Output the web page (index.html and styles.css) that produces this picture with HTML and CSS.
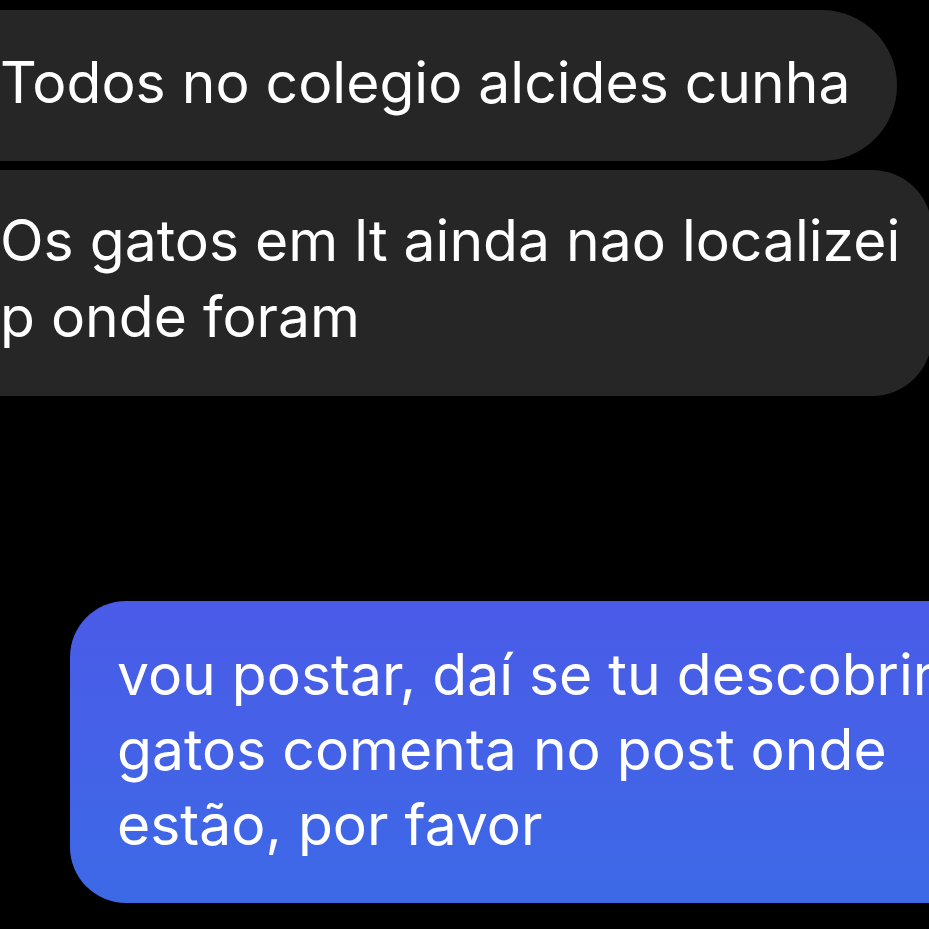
FILE: index.html
```html
<!DOCTYPE html>
<html lang="pt">
<head>
<meta charset="utf-8">
<title>Mensagens</title>
<link rel="stylesheet" href="styles.css">
</head>
<body>
<div class="chat">
  <div class="bubble incoming first">Todos no colegio alcides cunha</div>
  <div class="bubble incoming second">Os gatos em lt ainda nao localizei<br>p onde foram</div>
  <div class="bubble outgoing">vou postar, daí se tu descobrir<br>gatos comenta no post onde<br>estão, por favor</div>
</div>
</body>
</html>
```
FILE: styles.css
```css
html, body {
  margin: 0;
  padding: 0;
  background: #000;
}
body {
  width: 929px;
  height: 929px;
  overflow: hidden;
  font-family: Inter, "Noto Sans", sans-serif;
  color: #fff;
  -webkit-font-smoothing: antialiased;
}
.chat {
  display: flex;
  flex-direction: column;
  align-items: flex-start;
  padding-top: 10px;
  gap: 9px;
}
.bubble {
  font-size: 57px;
  line-height: 76px;
  white-space: nowrap;
  box-sizing: border-box;
}
.incoming {
  background: #262626;
  margin-left: -80px;
  padding-left: 80px;
}
.first {
  width: 977px;
  height: 151px;
  padding-top: 35px;
  border-radius: 76px;
}
.second {
  width: 1012px;
  height: 226px;
  padding-top: 33px;
  border-radius: 60px;
}
.outgoing {
  margin-top: 196px;
  margin-left: 70px;
  width: 1000px;
  height: 302px;
  padding: 36px 0 0 47px;
  line-height: 75px;
  border-radius: 56px;
  background: linear-gradient(180deg, #4a5be8 0%, #4462e7 50%, #3c69e6 100%);
}
```
